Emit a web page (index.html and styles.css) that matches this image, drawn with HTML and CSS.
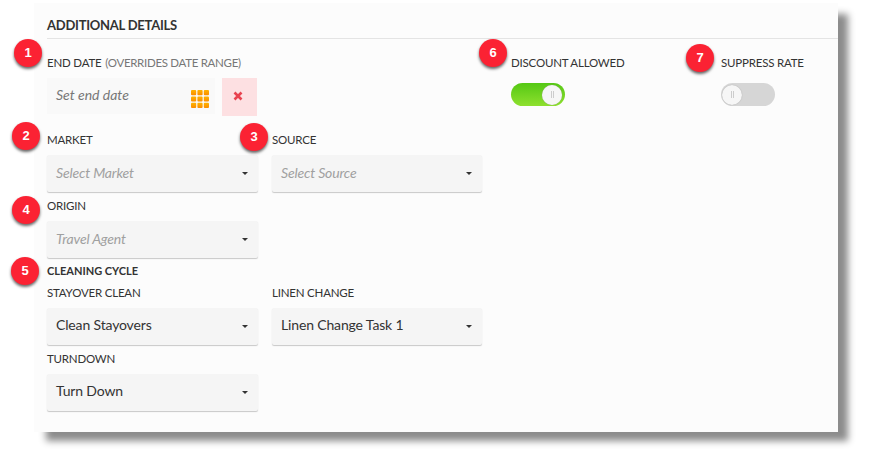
FILE: index.html
```html
<!DOCTYPE html>
<html>
  <head>
    <title>additional details</title>
    <link rel="stylesheet" href="styles.css">
  </head>
  <body>
    <div class="panel">
      <div class="panel-title">ADDITIONAL DETAILS</div>

      <div class="top-row">
        <div class="end-date">
          <div class="label">END DATE <span class="hint">(OVERRIDES DATE RANGE)</span></div>
          <div class="date-row">
            <div class="date-input">
              <span class="date-text">Set end date</span>
              <svg class="grid-icon" width="18" height="18" viewBox="0 0 18 18">
                <defs>
                  <linearGradient id="cell" x1="0" y1="0" x2="0" y2="1">
                    <stop offset="0" stop-color="#ffb300"/>
                    <stop offset="1" stop-color="#fb8c00"/>
                  </linearGradient>
                </defs>
                <rect x="0" y="0" width="5.2" height="5.2" rx="1" fill="url(#cell)"/>
                <rect x="6.4" y="0" width="5.2" height="5.2" rx="1" fill="url(#cell)"/>
                <rect x="12.8" y="0" width="5.2" height="5.2" rx="1" fill="url(#cell)"/>
                <rect x="0" y="6.4" width="5.2" height="5.2" rx="1" fill="url(#cell)"/>
                <rect x="6.4" y="6.4" width="5.2" height="5.2" rx="1" fill="url(#cell)"/>
                <rect x="12.8" y="6.4" width="5.2" height="5.2" rx="1" fill="url(#cell)"/>
                <rect x="0" y="12.8" width="5.2" height="5.2" rx="1" fill="url(#cell)"/>
                <rect x="6.4" y="12.8" width="5.2" height="5.2" rx="1" fill="url(#cell)"/>
                <rect x="12.8" y="12.8" width="5.2" height="5.2" rx="1" fill="url(#cell)"/>
              </svg>
            </div>
            <div class="clear-btn">
              <svg width="10" height="10" viewBox="0 0 10 10">
                <path d="M1.5 1.5 L8.5 8.5 M8.5 1.5 L1.5 8.5" stroke="#e8424f" stroke-width="2.6" fill="none"/>
              </svg>
            </div>
          </div>
        </div>

        <div class="toggle-field">
          <div class="label">DISCOUNT ALLOWED</div>
          <div class="toggle on"><div class="knob"><i></i></div></div>
        </div>
        <div class="toggle-field">
          <div class="label">SUPPRESS RATE</div>
          <div class="toggle"><div class="knob"><i></i></div></div>
        </div>
      </div>

      <div class="row">
        <div class="field">
          <div class="label">MARKET</div>
          <div class="select placeholder">Select Market<span class="caret"></span></div>
        </div>
        <div class="field">
          <div class="label">SOURCE</div>
          <div class="select placeholder">Select Source<span class="caret"></span></div>
        </div>
      </div>

      <div class="row">
        <div class="field">
          <div class="label">ORIGIN</div>
          <div class="select placeholder">Travel Agent<span class="caret"></span></div>
        </div>
      </div>

      <div class="section-label">CLEANING CYCLE</div>

      <div class="row">
        <div class="field">
          <div class="label">STAYOVER CLEAN</div>
          <div class="select">Clean Stayovers<span class="caret"></span></div>
        </div>
        <div class="field">
          <div class="label">LINEN CHANGE</div>
          <div class="select">Linen Change Task 1<span class="caret"></span></div>
        </div>
      </div>

      <div class="row">
        <div class="field">
          <div class="label">TURNDOWN</div>
          <div class="select">Turn Down<span class="caret"></span></div>
        </div>
      </div>
    </div>

    <div class="badge b1">1</div>
    <div class="badge b2">2</div>
    <div class="badge b3">3</div>
    <div class="badge b4">4</div>
    <div class="badge b5">5</div>
    <div class="badge b6">6</div>
    <div class="badge b7">7</div>
  </body>
</html>
```

FILE: styles.css
```css
html {
  height: 100%;
}

body {
  margin: 0;
  padding-top: 3px;
  box-sizing: border-box;
  height: 100%;
  background: #fff;
  font-family: "Lato", sans-serif;
  color: #333;
}

.panel {
  box-sizing: border-box;
  width: 804px;
  height: 429px;
  margin-left: 34px;
  padding-left: 13px;
  background: #fcfcfc;
  box-shadow: 11px 10px 7px -1px #8c8c8c;
}

.panel-title {
  height: 35px;
  line-height: 44px;
  font-size: 13px;
  font-weight: 700;
  letter-spacing: -0.25px;
  border-bottom: 1px solid #e4e4e4;
}

.label {
  height: 29px;
  line-height: 28px;
  font-size: 11.5px;
  letter-spacing: -0.2px;
  color: #333;
}

.hint {
  margin-left: 1px;
  letter-spacing: -0.3px;
  color: #777;
}

.top-row {
  display: flex;
  margin-top: 9px;
  height: 78px;
}

.top-row .label {
  line-height: 30px;
}

.end-date {
  flex: none;
  width: 464px;
}

.date-row {
  display: flex;
  gap: 7px;
  margin-top: 1px;
}

.date-input {
  display: flex;
  align-items: center;
  justify-content: space-between;
  box-sizing: border-box;
  width: 168px;
  height: 36px;
  padding: 0 6px 0 9px;
  background: #f9f9f9;
  font-size: 14px;
  font-style: italic;
  color: #777;
}

.date-text {
  margin-bottom: 3px;
}

.grid-icon {
  margin-top: 6px;
}

.clear-btn {
  display: flex;
  align-items: center;
  justify-content: center;
  width: 35px;
  height: 38px;
  background: #fde0e2;
}

.clear-btn svg {
  margin-left: -3px;
  margin-top: -3px;
}

.toggle-field {
  flex: none;
  width: 210px;
}

.toggle-field:last-child {
  width: 110px;
}

.toggle {
  display: flex;
  box-sizing: border-box;
  align-items: center;
  width: 54px;
  height: 23px;
  margin-top: 6px;
  padding: 0 1px;
  border-radius: 12px;
  background: #d6d6d6;
}

.toggle.on {
  justify-content: flex-end;
  padding: 0 3px;
  background: linear-gradient(#55c814, #8ee02e);
}

.knob {
  display: flex;
  align-items: center;
  justify-content: center;
  width: 20px;
  height: 20px;
  border-radius: 50%;
  background: #f6f6f6;
  box-shadow: 0 0 1px #999;
}

.knob i {
  width: 1px;
  height: 7px;
  border-left: 1px solid #ccc;
  border-right: 1px solid #ccc;
}

.row {
  display: flex;
  gap: 14px;
}

.field {
  width: 211px;
}

.field + .field {
  width: 210px;
}

.select {
  position: relative;
  box-sizing: border-box;
  height: 37px;
  line-height: 34px;
  padding-left: 9px;
  background: #f5f5f5;
  border-radius: 2px;
  box-shadow: 0 1px 1px #c8c8c8;
  font-size: 14px;
  letter-spacing: -0.15px;
  color: #333;
}

.select.placeholder {
  line-height: 35px;
  font-style: italic;
  color: #a0a0a0;
}

.caret {
  position: absolute;
  top: 17px;
  right: 10px;
  border-top: 3px solid #333;
  border-left: 3px solid transparent;
  border-right: 3px solid transparent;
}

.section-label {
  height: 21px;
  padding-top: 4px;
  box-sizing: border-box;
  line-height: 18px;
  font-size: 11px;
  font-weight: 700;
}

.badge {
  position: absolute;
  width: 28px;
  height: 28px;
  line-height: 27px;
  text-align: center;
  border-radius: 50%;
  background: #fb2233;
  color: #fff;
  font-family: "Liberation Sans", sans-serif;
  font-size: 13px;
  font-weight: 700;
  box-shadow: 0 2px 3px rgba(0, 0, 0, 0.6);
}

.b1 { left: 14px; top: 39px; }
.b2 { left: 12px; top: 122px; }
.b3 { left: 240px; top: 123px; }
.b4 { left: 12px; top: 196px; }
.b5 { left: 11px; top: 257px; }
.b6 { left: 479px; top: 39px; }
.b7 { left: 686px; top: 44px; }
```
